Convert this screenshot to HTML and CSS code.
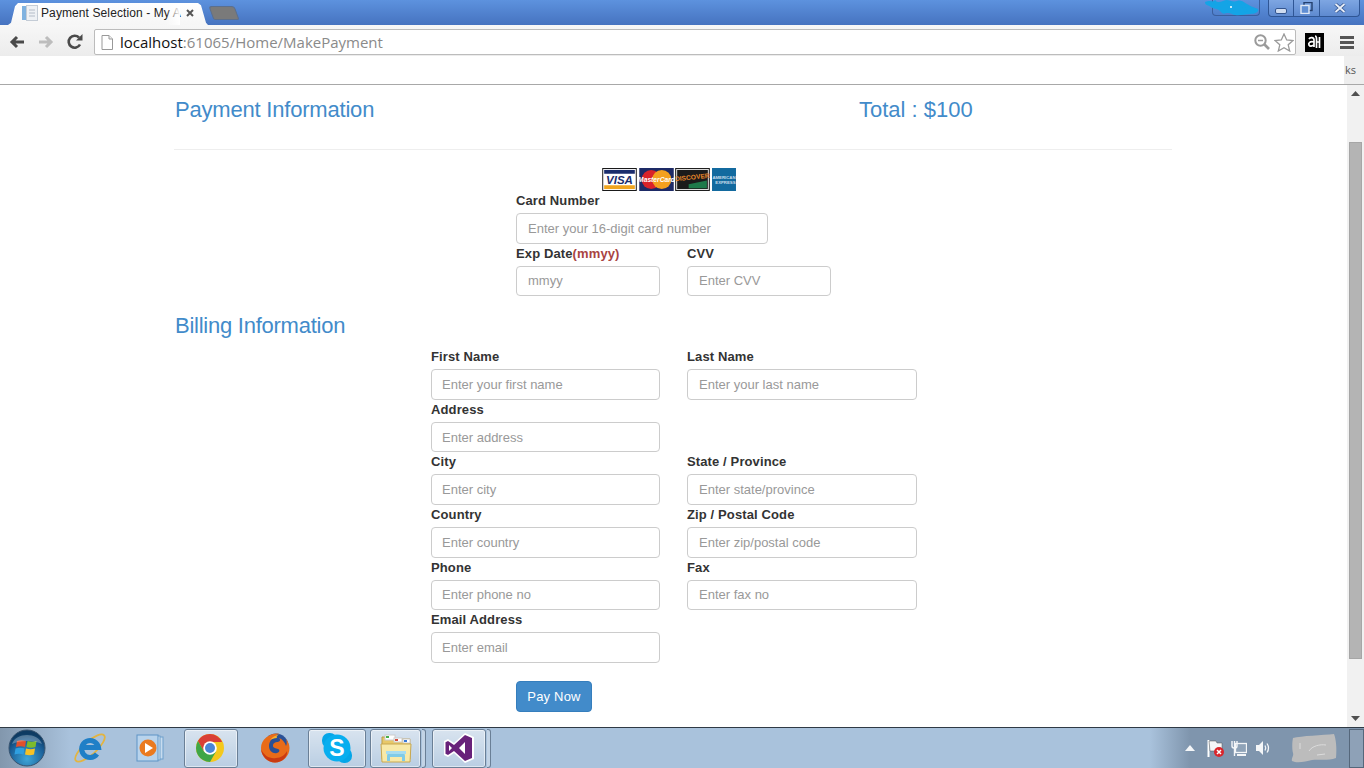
FILE: index.html
```html
<!DOCTYPE html>
<html lang="en">
<head>
  <meta charset="UTF-8" />
  <meta name="viewport" content="width=device-width, initial-scale=1.0" />
  <title>Payment Selection - My ASP.NET Application</title>
  <link rel="stylesheet" href="styles.css">
</head>
<body>
  <div class="window">
    <!-- Browser tabs -->
    <div class="tabbar">
      <div class="tab">
        <svg class="tab-icon" width="16" height="16" viewBox="0 0 16 16">
          <rect x="0" y="1" width="5" height="14" fill="#7fb2e0"/>
          <rect x="4.500" y=".5" width="11" height="15" fill="#eef1f5" stroke="#c4ccd6" stroke-width="1"/>
          <path d="M7 5h6M7 8h6M7 11h6" stroke="#b4bcc8" stroke-width="1"/>
        </svg>
        <span class="tab-title">Payment Selection - My A</span>
        <span class="tab-fade"></span>
        <svg class="tab-close" width="8" height="8" viewBox="0 0 8 8"><path d="M1 1l6 6M7 1l-6 6" stroke="#555" stroke-width="2"/></svg>
      </div>
      <div class="newtab"></div>
      <div class="userbtn">
        <svg class="scribble" width="56" height="17" viewBox="0 0 56 17">
          <path d="M1 2c6-3 12 2 18-1s8 2 14 0 8 4 21 8c1 3-2 5-8 5s-12 3-18 0-8 2-11-2-8-3-10-5-6-1-6-5z" fill="#14a4e6"/>
          <path d="M10 1l5 6M25 2l3 9M38 4l4 8" stroke="#14a4e6" stroke-width="3"/>
          <circle cx="27" cy="7" r="1" fill="#fff"/>
        </svg>
      </div>
      <div class="winctl">
        <span class="winbtn min"><svg width="12" height="6" viewBox="0 0 12 6"><rect x="0.500" y="0.500" width="11" height="5" rx="1.500" fill="#cfdcf0" stroke="#33558f"/></svg></span>
        <span class="winbtn rest"><svg width="13" height="12" viewBox="0 0 13 12"><rect x="4" y="0.500" width="8" height="8" fill="none" stroke="#24406f" stroke-width="1.400"/><rect x="1" y="3.500" width="8" height="8" fill="#5f8ed3" stroke="#dfe8f5" stroke-width="1.400"/></svg></span>
        <span class="winbtn close"><svg width="12" height="10" viewBox="0 0 12 10"><path d="M1.500 1l9 8M10.500 1l-9 8" stroke="#33558f" stroke-width="3.400"/><path d="M1.500 1l9 8M10.500 1l-9 8" stroke="#e8eef8" stroke-width="1.800"/></svg></span>
      </div>
    </div>

    <!-- Browser toolbar -->
    <div class="toolbar">
      <svg class="navicon" width="16" height="14" viewBox="0 0 16 14"><path d="M15 7H4M8 2L3 7l5 5" fill="none" stroke="#4a4a4a" stroke-width="3"/></svg>
      <svg class="navicon" width="16" height="14" viewBox="0 0 16 14"><path d="M1 7h11M8 2l5 5-5 5" fill="none" stroke="#bdbdbd" stroke-width="3"/></svg>
      <svg class="navicon" width="16" height="16" viewBox="0 0 16 16"><path d="M13 10.500A6 6 0 1 1 12 3.500" fill="none" stroke="#4a4a4a" stroke-width="2.600"/><path d="M9 6.500h6.500V0z" fill="#4a4a4a"/></svg>
      <div class="omnibox">
        <svg class="page-icon" width="12" height="15" viewBox="0 0 12 15"><path d="M1 .5h7l3.500 3.500v10.500h-10.500z" fill="#fff" stroke="#999"/><path d="M8 .5v3.500h3.500" fill="#eee" stroke="#999"/></svg>
        <span class="url"><span class="url-host">localhost</span>:61065/Home/MakePayment</span>
        <svg class="omni-icon" width="16" height="16" viewBox="0 0 16 16"><circle cx="6.500" cy="6.500" r="5.200" fill="none" stroke="#9a9a9a" stroke-width="2"/><path d="M4 6.500h5" stroke="#9a9a9a" stroke-width="1.500"/><path d="M10.500 10.500l4.500 4.500" stroke="#9a9a9a" stroke-width="2.600"/></svg>
        <svg class="omni-icon" width="20" height="19" viewBox="0 0 20 19"><path d="M10 1l2.700 6 6.300.6-4.800 4.200 1.500 6.200-5.700-3.300-5.700 3.300 1.500-6.200L1 7.600 7.300 7z" fill="#fff" stroke="#9a9a9a" stroke-width="1.300"/></svg>
      </div>
      <svg class="ext" width="19" height="19" viewBox="0 0 19 19"><rect width="19" height="19" fill="#000"/><path d="M4 6c1-2 5-2 5 1v7M9 9c-4-1-6 1-5 3 1 2 3 1 5 0M10 3c2 0 1.500 4 1.500 6v6M11 9h3.500M14.500 4v11" fill="none" stroke="#fff" stroke-width="1.700"/></svg>
      <svg class="menu" width="14" height="13" viewBox="0 0 14 13"><path d="M0 1.500h14M0 6.500h14M0 11.500h14" stroke="#555" stroke-width="3"/></svg>
    </div>

    <!-- Bookmarks bar -->
    <div class="bookmarks">
      <div class="bookmarks-blank"></div>
      <div class="bookmarks-more">ks</div>
    </div>

    <div class="viewport">
      <main class="page">
        <header class="page-head">
          <h3 class="heading head-left">Payment Information</h3>
          <h3 class="heading">Total : $100</h3>
        </header>
        <hr class="rule" />

        <div class="cards">
          <svg class="card-logo" width="35" height="23" viewBox="0 0 36 24">
            <rect x=".5" y=".5" width="35" height="23" fill="#fff" stroke="#111"/>
            <rect x="2" y="2" width="32" height="4" fill="#1a2d6d"/>
            <rect x="2" y="18" width="32" height="4" fill="#f0a51e"/>
            <text x="18" y="16.500" text-anchor="middle" class="visa">VISA</text>
          </svg>
          <svg class="card-logo" width="35" height="23" viewBox="0 0 36 24">
            <rect width="36" height="24" fill="#1d2a66"/>
            <circle cx="12.500" cy="12" r="10" fill="#d9222a"/>
            <circle cx="23.500" cy="12" r="10" fill="#f3a01f"/>
            <text x="18" y="14.500" text-anchor="middle" class="mc">MasterCard</text>
          </svg>
          <svg class="card-logo" width="35" height="23" viewBox="0 0 36 24">
            <rect x=".5" y=".5" width="35" height="23" fill="#111" stroke="#111"/>
            <rect x="1.500" y="1.500" width="33" height="21" fill="#1b1b1b" stroke="#eee"/>
            <path d="M14 17l19-4v8H14z" fill="#1e7a4a"/>
            <text x="18" y="12" text-anchor="middle" class="disc" transform="rotate(-6 18 12)">DISCOVER</text>
          </svg>
          <svg class="card-logo" width="24" height="23" viewBox="0 0 25 24">
            <rect width="25" height="24" fill="#136a9f"/>
            <text x="12.500" y="11" text-anchor="middle" class="amex">AMERICAN</text>
            <text x="14" y="17" text-anchor="middle" class="amex">EXPRESS</text>
          </svg>
        </div>

        <form class="card-form">
          <div class="field">
            <label class="label">Card Number</label>
            <input class="input input-card" type="text" placeholder="Enter your 16-digit card number" />
          </div>
          <div class="row row-card">
            <div class="field">
              <label class="label">Exp Date<span class="danger">(mmyy)</span></label>
              <input class="input input-short" type="text" placeholder="mmyy" />
            </div>
            <div class="field">
              <label class="label">CVV</label>
              <input class="input input-short" type="text" placeholder="Enter CVV" />
            </div>
          </div>
        </form>

        <h3 class="heading billing">Billing Information</h3>

        <form class="billing-form">
          <div class="row">
            <div class="field"><label class="label">First Name</label><input class="input" type="text" placeholder="Enter your first name" /></div>
            <div class="field"><label class="label">Last Name</label><input class="input input-right" type="text" placeholder="Enter your last name" /></div>
          </div>
          <div class="row">
            <div class="field"><label class="label">Address</label><input class="input" type="text" placeholder="Enter address" /></div>
          </div>
          <div class="row">
            <div class="field"><label class="label">City</label><input class="input" type="text" placeholder="Enter city" /></div>
            <div class="field"><label class="label">State / Province</label><input class="input input-right" type="text" placeholder="Enter state/province" /></div>
          </div>
          <div class="row">
            <div class="field"><label class="label">Country</label><input class="input" type="text" placeholder="Enter country" /></div>
            <div class="field"><label class="label">Zip / Postal Code</label><input class="input input-right" type="text" placeholder="Enter zip/postal code" /></div>
          </div>
          <div class="row">
            <div class="field"><label class="label">Phone</label><input class="input" type="text" placeholder="Enter phone no" /></div>
            <div class="field"><label class="label">Fax</label><input class="input input-right" type="text" placeholder="Enter fax no" /></div>
          </div>
          <div class="row">
            <div class="field"><label class="label">Email Address</label><input class="input" type="text" placeholder="Enter email" /></div>
          </div>
        </form>

        <button class="pay" type="button">Pay Now</button>
      </main>

      <div class="scrollbar">
        <div class="sb-arrow"><svg width="9" height="5" viewBox="0 0 9 5"><path d="M4.500 0L9 5H0z" fill="#505050"/></svg></div>
        <div class="sb-track"><div class="sb-thumb"></div></div>
        <div class="sb-arrow"><svg width="9" height="5" viewBox="0 0 9 5"><path d="M0 0h9L4.500 5z" fill="#505050"/></svg></div>
      </div>
    </div>

    <!-- Windows taskbar -->
    <footer class="taskbar">
      <div class="orb">
        <svg width="38" height="38" viewBox="0 0 38 38">
          <defs>
            <radialGradient id="orbfill" cx="50%" cy="80%" r="70%"><stop offset="0" stop-color="#3fa6d8"/><stop offset=".7" stop-color="#1a5f98"/><stop offset="1" stop-color="#0e3b63"/></radialGradient>
          </defs>
          <circle cx="19" cy="19" r="18" fill="url(#orbfill)" stroke="#38536e"/>
          <path d="M9 12c3-1 6-1 9 0l-1 6c-3-1-6-1-9 0z" fill="#e2502c"/>
          <path d="M19.500 12c3 1 6 1 9 0l-1 6c-3 1-6 1-9 0z" fill="#7cbb2c"/>
          <path d="M7.500 19.500c3-1 6-1 9 0l-1 6c-3-1-6-1-9 0z" fill="#2f9fe0"/>
          <path d="M18 19.500c3 1 6 1 9 0l-1 6c-3 1-6 1-9 0z" fill="#f6c124"/>
          <path d="M4 15C8 3 30 3 34 15 26 11 12 11 4 15z" fill="#fff" opacity=".28"/>
        </svg>
      </div>
      <div class="task task-ie">
        <svg width="32" height="32" viewBox="0 0 32 32">
          <ellipse cx="16" cy="16" rx="19" ry="6.500" transform="rotate(-42 16 16)" fill="none" stroke="#e3b440" stroke-width="1.800"/>
          <path d="M8.500 15.500h16A8.500 8.500 0 1 0 23 22" fill="none" stroke="#1f7fc7" stroke-width="5"/>
        </svg>
      </div>
      <div class="task task-wmp">
        <svg width="28" height="28" viewBox="0 0 28 28">
          <rect x="7" y="3" width="20" height="22" fill="#c8dcef" stroke="#6fa0cc"/>
          <rect x="4" y="2" width="20" height="24" fill="#d7e7f5" stroke="#6fa0cc"/>
          <rect x="1" y="1" width="21" height="26" fill="#b8d3ec" stroke="#5e94c6"/>
          <circle cx="12" cy="14" r="8.500" fill="#ea7a20"/>
          <path d="M9 9l8 5-8 5z" fill="#fff"/>
        </svg>
      </div>
      <div class="task task-chrome is-open">
        <svg width="28" height="28" viewBox="0 0 28 28">
          <circle cx="14" cy="14" r="14" fill="#f4c81c"/>
          <path d="M14 0A14 14 0 0 0 1.900 7L8 17.500 14 8h12.100A14 14 0 0 0 14 0z" fill="#d93f36"/>
          <path d="M1.900 7A14 14 0 0 0 14 28l6-10.500-12 0z" fill="#3fa648"/>
          <circle cx="14" cy="14" r="6.800" fill="#fff"/>
          <circle cx="14" cy="14" r="5" fill="#4a86d8"/>
        </svg>
      </div>
      <div class="task task-ff">
        <svg width="30" height="30" viewBox="0 0 30 30">
          <circle cx="16" cy="13" r="12.500" fill="#2a5096"/>
          <path d="M19 .5C10-.5 1 6 1 15c0 8 6 14.500 14 14.500S29.500 23 29.500 15c0-3-1.500-7-3.500-9 1 3 1 5 0 7-1-4-4-7-7-8 2 2 1 3-1 4-3 0-5 1-5 4 0 2 3 2 5 3s2 3-1 4c-4 1-8-2-8-7s4-9 10-12.500z" fill="#e96b18"/>
          <path d="M15 29.500C8 29.500 2 24 1 16c3 7 9 10 15 9 5 0 9-3 11-7 1 6-5 11.500-12 11.500z" fill="#c93a12"/>
          <path d="M20 1c-4 1-8 3-10 6 2-1 4-2 7-2-1-1 0-3 3-4z" fill="#f8b02c"/>
        </svg>
      </div>
      <div class="task task-skype is-open">
        <svg width="32" height="32" viewBox="0 0 32 32">
          <rect x="1" y="1" width="15" height="15" rx="7" fill="#05a6e8"/>
          <rect x="16" y="16" width="15" height="15" rx="7" fill="#05a6e8"/>
          <circle cx="16" cy="16" r="13.500" fill="#08aeef"/>
          <text x="16" y="24" text-anchor="middle" class="skype-s">S</text>
        </svg>
      </div>
      <div class="task task-folder is-open">
        <svg width="32" height="30" viewBox="0 0 32 30">
          <path d="M2 4h12l2 2h14v20H2z" fill="#e8c868" stroke="#b89a4a"/>
          <rect x="5" y="2" width="10" height="5" fill="#fff" stroke="#ccc"/>
          <rect x="6" y="3" width="3" height="2" fill="#46b04a"/>
          <rect x="14" y="5" width="8" height="4" fill="#fff" stroke="#ccc"/>
          <rect x="15" y="6" width="3" height="2" fill="#d84a3a"/>
          <rect x="23" y="6" width="7" height="4" fill="#fff" stroke="#ccc"/>
          <rect x="24" y="7" width="3" height="2" fill="#3a7ad8"/>
          <path d="M1 11h30l-1 18H2z" fill="#f8e9a8" stroke="#c8a850"/>
          <path d="M7 28v-5q0-3 3-3h12q3 0 3 3v5h-3v-4H10v4z" fill="#7fcbe8"/>
          <rect x="6" y="18" width="20" height="3" fill="#a6dcf0"/>
        </svg>
      </div>
      <div class="stack-edge"></div>
      <div class="task task-vs is-open">
        <svg width="32" height="32" viewBox="0 0 32 32">
          <path d="M22 1l9 4v22l-9 4-11-10-6 4-4-2V9l4-2 6 4z" fill="#fff"/>
          <path d="M22 3l7 3v20l-7 3-11-10-6 4-2.500-1.200V10.200L5 9l6 4zM22 10l-6 6 6 6zM6 13v6l3-3z" fill="#68217a" fill-rule="evenodd"/>
        </svg>
      </div>
      <div class="stack-edge"></div>

      <div class="tray">
        <svg class="tray-arrow" width="10" height="6" viewBox="0 0 10 6"><path d="M5 0l5 6H0z" fill="#f4f6f8"/></svg>
        <svg class="tray-flag" width="18" height="17" viewBox="0 0 18 17">
          <path d="M1.500 0v17" stroke="#fff" stroke-width="2"/>
          <path d="M2 1h7l1 2h5v8H3z" fill="#f4f6f8" stroke="#555" stroke-width=".5"/>
          <circle cx="12" cy="12" r="5" fill="#d9262c"/>
          <path d="M10 10l4 4M14 10l-4 4" stroke="#fff" stroke-width="1.500"/>
        </svg>
        <svg width="16" height="17" viewBox="0 0 16 17">
          <rect x="4.500" y="3.500" width="11" height="9" fill="#8fa3b8" stroke="#f4f6f8" stroke-width="1.300"/>
          <path d="M6 15h9" stroke="#f4f6f8" stroke-width="2"/>
          <path d="M1 1v5q0 2 2 2h1q2 0 2-2V1M3.500 1v15" fill="none" stroke="#f4f6f8" stroke-width="1.400"/>
        </svg>
        <svg width="16" height="16" viewBox="0 0 16 16">
          <path d="M1 5h3l4-4v14l-4-4H1z" fill="#f4f6f8"/>
          <path d="M10 5.500q1.500 2.500 0 5M12 3.500q3 4.500 0 9" fill="none" stroke="#f4f6f8" stroke-width="1.300"/>
        </svg>
        <svg class="clock-blot" width="46" height="31" viewBox="0 0 46 31">
          <path d="M2 5c8-2 30-3 41-4 2 5 3 14 2 24-8 3-18 1-24 2-6 1-14 4-20 1-1-3 2-5 1-8S1 9 2 5z" fill="#bcbcbc"/>
          <path d="M9 10v6M18 18c3-5 11-7 17-6M26 22l8-1" fill="none" stroke="#dcdcdc" stroke-width="1"/>
        </svg>
      </div>
      <div class="show-desktop"></div>
    </footer>
  </div>
</body>
</html>
```

FILE: styles.css
```css
* {
  box-sizing: border-box;
}
html, body {
  margin: 0;
  padding: 0;
  height: 100%;
  overflow: hidden;
}
body {
  font-family: "Liberation Sans", Arial, sans-serif;
  font-size: 14px;
  color: #333;
  background: #fff;
}
.window {
  display: flex;
  flex-direction: column;
  height: 768px;
}

/* tabs */
.tabbar {
  display: flex;
  align-items: flex-start;
  height: 25px;
  padding-top: 3px;
  padding-left: 8px;
  background: linear-gradient(to bottom, #5d92de, #4673c0);
}
.tab {
  display: flex;
  align-items: center;
  width: 200px;
  height: 22px;
  padding-left: 14px;
  padding-bottom: 2px;
  background: linear-gradient(to bottom, #fff, #f6f6f6);
  clip-path: polygon(0 100%, 3px 90%, 7px 15%, 10px 0, 190px 0, 193px 10%, 198px 90%, 100% 100%);
  position: relative;
  font-size: 12px;
  letter-spacing: .1px;
  color: #222;
}
.tab-icon {
  flex: none;
  margin-right: 3px;
}
.tab-title {
  white-space: nowrap;
  width: 138px;
}
.tab-fade {
  position: absolute;
  left: 158px;
  top: 0;
  width: 14px;
  height: 22px;
  background: linear-gradient(to right, rgba(255,255,255,0), #fff);
}
.tab-close {
  margin-left: 7px;
  position: relative;
}
.newtab {
  width: 26px;
  height: 14px;
  margin-top: 3px;
  margin-left: 3px;
  background: #7a7a7a;
  border: 1px solid #5c6f8c;
  border-radius: 3px 3px 2px 2px;
  transform: skewX(20deg);
}
.userbtn {
  width: 48px;
  height: 16px;
  margin-left: auto;
  margin-top: -3px;
  margin-right: 8px;
  border: 1px solid #3a5f9e;
  border-top: 0;
  border-radius: 0 0 4px 4px;
  position: relative;
}
.scribble {
  position: absolute;
  left: -9px;
  top: 0;
}
.winctl {
  display: flex;
  height: 17px;
  margin-top: -3px;
  margin-right: 4px;
  border: 1px solid #2f5695;
  border-top: 0;
  border-radius: 0 0 4px 4px;
  background: linear-gradient(to bottom, #7ea6e2, #5e8ad0);
}
.winbtn {
  display: flex;
  align-items: center;
  justify-content: center;
  height: 16px;
  border-right: 1px solid #2f5695;
}
.winbtn.min {
  width: 25px;
  align-items: flex-end;
  padding-bottom: 2px;
}
.winbtn.rest { width: 26px; }
.winbtn.close { width: 39px; border-right: 0; }

/* toolbar */
.toolbar {
  display: flex;
  align-items: center;
  height: 31px;
  padding-top: 3px;
  padding-left: 9px;
  background: linear-gradient(to bottom, #f7f7f7, #ececec);
}
.navicon {
  flex: none;
  margin-right: 13px;
}
.omnibox {
  display: flex;
  align-items: center;
  flex: none;
  width: 1202px;
  height: 26px;
  margin-left: -2px;
  padding: 0 1px 0 6px;
  background: #fff;
  border: 1px solid #bcbcbc;
  border-radius: 2px;
}
.page-icon {
  flex: none;
  margin-right: 7px;
}
.url {
  flex: 1;
  font-family: "Open Sans", sans-serif;
  font-size: 15px;
  color: #8a8a8a;
}
.url-host {
  color: #111;
}
.omni-icon {
  flex: none;
  margin-left: 4px;
}
.ext {
  flex: none;
  margin-left: 9px;
}
.menu {
  flex: none;
  margin-left: 16px;
}

/* bookmarks */
.bookmarks {
  display: flex;
  height: 29px;
  border-bottom: 1px solid #a8a8a8;
  background: #eeeeee;
}
.bookmarks-blank {
  width: 1344px;
  background: #fff;
}
.bookmarks-more {
  padding-left: 1px;
  font-family: "Open Sans", sans-serif;
  font-size: 11px;
  line-height: 28px;
  color: #555;
}

/* page */
.viewport {
  display: flex;
  flex: 1;
  min-height: 0;
}
.page {
  flex: 1;
  min-width: 0;
  padding-left: 175px;
  overflow: hidden;
}
.page-head {
  display: flex;
  width: 997px;
  padding-top: 11px;
}
.heading {
  margin: 0;
  font-size: 22px;
  font-weight: 400;
  line-height: 28px;
  color: #428bca;
}
.head-left {
  width: 684px;
  letter-spacing: -.2px;
}
.rule {
  width: 998px;
  margin: 25px 0 18px -1px;
  border: 0;
  border-top: 1px solid #eeeeee;
}
.cards {
  display: flex;
  height: 23px;
  margin-left: 427px;
  gap: 2px;
}
.card-logo {
  display: block;
  flex: none;
}
.card-logo:nth-child(3) {
  margin-left: -1px;
}
.visa {
  font: italic bold 12px "Liberation Sans", sans-serif;
  fill: #1a2d6d;
}
.mc {
  font: italic bold 7px "Liberation Sans", sans-serif;
  fill: #fff;
}
.disc {
  font: bold 7px "Liberation Sans", sans-serif;
  fill: #e8862a;
}
.amex {
  font: bold 4.500px "Liberation Sans", sans-serif;
  fill: #c8dcea;
}
.card-form {
  margin-left: 341px;
  margin-top: -1px;
}
.row {
  display: flex;
}
.row .field {
  width: 256px;
}
.row-card .field {
  width: 171px;
}
.field {
  height: 52.6px;
}
.label {
  display: block;
  height: 21px;
  margin-bottom: 2px;
  padding-top: 1px;
  font-size: 13px;
  font-weight: 700;
  line-height: 20px;
  letter-spacing: .12px;
  color: #333;
}
.danger {
  color: #a94442;
}
.input {
  display: block;
  width: 229px;
  height: 30.6px;
  padding: 6px 11px;
  font-family: "Liberation Sans", sans-serif;
  font-size: 13px;
  color: #555;
  background: #fff;
  border: 1px solid #ccc;
  border-radius: 4px;
}
.input::placeholder {
  color: #999;
  opacity: 1;
}
.billing-form .input {
  padding-left: 10px;
}
.billing-form .input-right {
  width: 230px;
  padding-left: 11px;
}
.input-card {
  width: 252px;
}
.input-short {
  width: 144px;
}
.billing {
  margin-top: 17px;
  letter-spacing: -.25px;
}
.billing-form {
  margin-left: 256px;
  margin-top: 6px;
}
.pay {
  display: block;
  width: 76px;
  height: 31px;
  margin-left: 341px;
  margin-top: 19px;
  padding: 0;
  font-family: "Liberation Sans", sans-serif;
  font-size: 13px;
  letter-spacing: .2px;
  color: #fff;
  background: #428bca;
  border: 1px solid #357ebd;
  border-radius: 4px;
}

/* scrollbar */
.scrollbar {
  display: flex;
  flex-direction: column;
  flex: none;
  width: 17px;
  background: #f1f1f1;
}
.sb-arrow {
  display: flex;
  align-items: center;
  justify-content: center;
  height: 17px;
  flex: none;
}
.sb-track {
  flex: 1;
  padding: 40px 2px 51px;
}
.sb-thumb {
  height: 100%;
  background: #b4b4b4;
  border: 1px solid #a6a6a6;
}

/* taskbar */
.taskbar {
  display: flex;
  align-items: center;
  height: 41px;
  flex: none;
  border-top: 1px solid #2f3a45;
  background: linear-gradient(to right, #8297ad 0, #a9c2dc 70px, #a9c2dc 1150px, #7f95ad 1190px, #7f95ad 100%);
}
.orb {
  display: flex;
  align-items: center;
  justify-content: center;
  width: 54px;
  height: 40px;
  flex: none;
}
.task {
  display: flex;
  align-items: center;
  justify-content: center;
  height: 39px;
  flex: none;
  border: 1px solid transparent;
  border-radius: 3px;
}
.is-open {
  background: linear-gradient(to bottom, rgba(255,255,255,.55), rgba(255,255,255,.2));
  border-color: #6a7f96;
  box-shadow: inset 0 0 0 1px rgba(255,255,255,.5);
}
.task-ie { width: 54px; margin-left: 9px; }
.task-wmp { width: 54px; margin-left: 6px; }
.task-chrome { width: 54px; margin-left: 7px; padding-right: 2px; }
.task-ff { width: 54px; margin-left: 10px; }
.task-skype { width: 58px; margin-left: 6px; }
.task-folder { width: 51px; margin-left: 4px; }
.task-vs { width: 54px; margin-left: 6px; }
.stack-edge {
  width: 4px;
  height: 39px;
  flex: none;
  margin-left: 1px;
  background: rgba(255,255,255,.3);
  border: 1px solid #6a7f96;
  border-left: 0;
  border-radius: 0 3px 3px 0;
}
.skype-s {
  font: bold 23px "Liberation Sans", sans-serif;
  fill: #fff;
}
.tray {
  display: flex;
  align-items: center;
  gap: 8px;
  margin-left: auto;
  height: 40px;
}
.tray-arrow {
  margin-right: 4px;
}
.tray-flag {
  margin-right: -2px;
}
.clock-blot {
  margin-left: 12px;
  margin-right: 12px;
}
.show-desktop {
  width: 15px;
  height: 39px;
  flex: none;
  background: rgba(255,255,255,.12);
  border: 1px solid #55677b;
}
```
